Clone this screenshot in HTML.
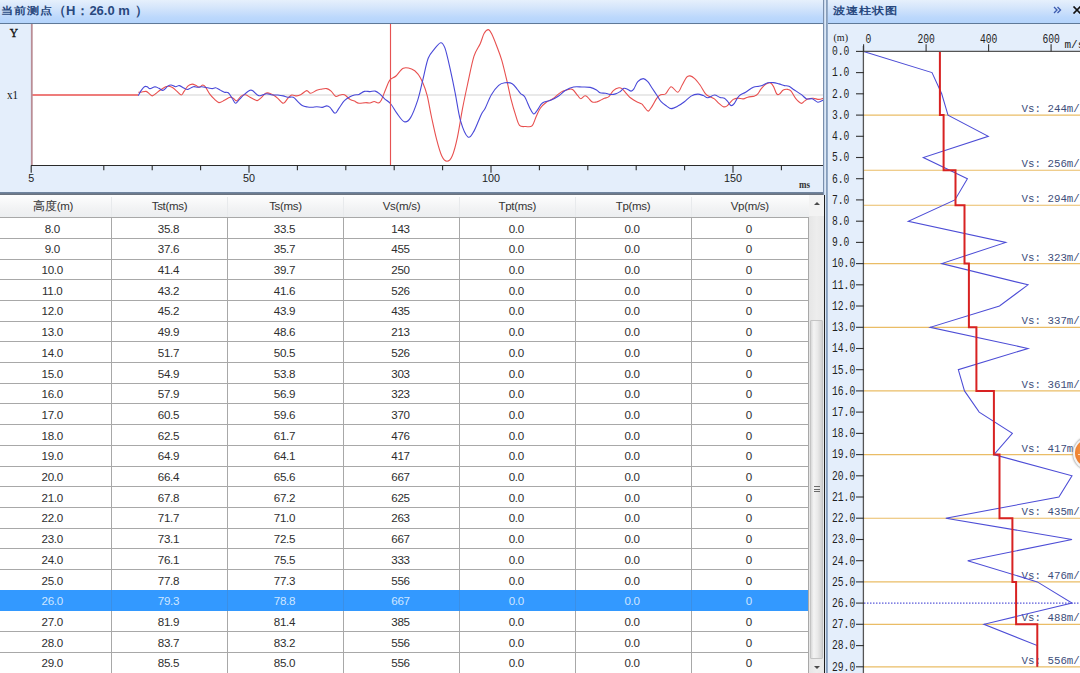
<!DOCTYPE html><html><head><meta charset="utf-8"><style>
*{margin:0;padding:0;box-sizing:border-box}
html,body{width:1080px;height:673px;overflow:hidden;background:#fff;font-family:"Liberation Sans",sans-serif}
.abs{position:absolute}
.cell{position:absolute;text-align:center;font-size:11.6px;letter-spacing:-0.3px;color:#2e2e2e;line-height:21px;white-space:nowrap}
</style></head><body>

<div class="abs" style="left:0;top:0;width:823px;height:24.2px;background:linear-gradient(#e6f0fc 0%,#d4e5fb 35%,#bcd8fc 75%,#b4d4fc 100%);border-bottom:1.8px solid #5f7998"></div>
<div class="abs" style="left:1px;top:3px;font-size:13px;font-weight:bold;color:#28487e;white-space:nowrap"><span style="font-size:12.5px;display:inline-block;transform:scaleY(0.82);transform-origin:50% 30%">当前测点</span><span style="font-size:12.5px">（</span>H<span style="font-size:12.5px;margin-left:1px">：</span>26.0 m<span style="font-size:12.5px;margin-left:2px"> ）</span></div>
<div class="abs" style="left:0;top:24.2px;width:823.2px;height:168px;background:#e4eefb"></div>
<div class="abs" style="left:0;top:192.1px;width:823.2px;height:3.3px;background:linear-gradient(#7088a6,#6a6f78)"></div>
<div class="abs" style="left:828px;top:24px;width:252px;height:650px;background:#e4eefb"></div>
<div class="abs" style="left:828px;top:0;width:252px;height:24.4px;background:linear-gradient(#e6f0fc 0%,#d4e5fb 35%,#bcd8fc 75%,#b4d4fc 100%);border-bottom:1.8px solid #5f7998"></div>
<div class="abs" style="left:833px;top:3px;font-size:12.5px;font-weight:bold;color:#28487e;white-space:nowrap;transform:scaleY(0.82);transform-origin:0 30%">波速柱状图</div>
<svg class="abs" style="left:1053px;top:6px" width="9" height="8"><path d="M1 1 L4 4 L1 7 M4.5 1 L7.5 4 L4.5 7" fill="none" stroke="#3d5cb0" stroke-width="1.35"/></svg>
<svg class="abs" style="left:1072px;top:6px" width="10" height="8"><path d="M1.5 0.5 L8.5 7.5 M8.5 0.5 L1.5 7.5" fill="none" stroke="#111" stroke-width="1.7"/></svg>
<svg class="abs" style="left:0;top:0" width="1080" height="673"><rect x="32" y="24.2" width="791.2" height="141.3" fill="#fff"/><line x1="138" y1="95" x2="823" y2="95" stroke="#d4d4d4" stroke-width="1.2"/><line x1="31.2" y1="95" x2="138.3" y2="95" stroke="#e8504f" stroke-width="1.4"/><path d="M138.3,92.2 C138.8,92.2 139.8,92.3 141.1,92.2 C142.4,92.1 144.7,91.1 146.1,91.4 C147.5,91.7 148.4,93.2 149.4,93.9 C150.4,94.7 151.2,95.9 152.2,95.9 C153.2,95.9 154.3,94.6 155.6,93.7 C156.9,92.8 158.3,91.5 160.0,90.3 C161.7,89.1 164.1,87.4 165.6,86.7 C167.1,86.0 167.7,86.1 168.9,86.3 C170.1,86.5 171.5,87.0 172.8,87.8 C174.1,88.6 175.3,89.9 176.7,91.1 C178.1,92.3 179.9,94.9 181.1,95.0 C182.3,95.1 182.8,93.2 183.9,91.7 C185.0,90.2 186.4,87.4 187.8,86.1 C189.2,84.8 190.8,84.2 192.2,84.1 C193.6,84.0 194.9,85.1 196.1,85.6 C197.3,86.1 198.3,87.3 199.4,87.2 C200.5,87.1 201.8,85.0 202.8,85.0 C203.8,85.0 204.4,85.6 205.6,87.2 C206.8,88.8 208.5,92.4 210.0,94.4 C211.5,96.4 212.9,97.8 214.4,99.2 C215.9,100.6 217.2,102.4 218.9,102.6 C220.6,102.8 222.6,101.2 224.4,100.3 C226.2,99.4 228.5,97.5 230.0,97.2 C231.5,96.9 232.2,97.7 233.3,98.3 C234.4,98.9 235.4,101.2 236.7,100.8 C238.0,100.4 239.6,97.1 241.1,96.1 C242.6,95.1 244.1,94.6 245.6,94.8 C247.1,95.0 248.7,96.5 250.0,97.2 C251.3,97.9 252.1,98.3 253.3,98.9 C254.5,99.5 255.9,100.8 257.2,100.6 C258.5,100.4 259.7,99.0 261.1,97.8 C262.5,96.6 264.2,94.0 265.6,93.3 C267.0,92.5 268.1,93.0 269.4,93.3 C270.7,93.6 271.9,94.2 273.3,95.0 C274.7,95.8 276.1,96.9 277.8,98.3 C279.5,99.7 281.6,103.3 283.3,103.3 C285.0,103.3 286.4,99.7 287.8,98.3 C289.2,96.9 290.2,95.4 291.7,95.0 C293.2,94.6 295.1,96.0 296.7,95.9 C298.3,95.8 299.4,95.3 301.1,94.4 C302.8,93.5 305.1,90.8 306.7,90.6 C308.3,90.4 308.9,93.3 310.6,93.3 C312.3,93.2 314.9,91.0 316.7,90.3 C318.4,89.6 319.4,89.5 321.1,89.2 C322.8,88.9 325.0,88.3 326.7,88.6 C328.4,88.9 329.6,89.8 331.1,91.1 C332.6,92.4 334.1,95.6 335.6,96.3 C337.1,97.0 338.5,95.2 340.0,95.0 C341.5,94.8 342.7,94.1 344.4,94.8 C346.1,95.5 348.3,98.4 350.0,99.4 C351.7,100.5 352.9,100.4 354.4,101.1 C355.9,101.8 357.0,103.0 358.9,103.3 C360.8,103.5 363.8,102.6 365.6,102.6 C367.5,102.5 368.6,103.2 370.0,103.0 C371.4,102.8 372.8,101.5 374.2,101.5 C375.6,101.5 377.1,103.3 378.3,103.0 C379.5,102.7 380.2,102.2 381.4,99.9 C382.6,97.7 384.2,92.8 385.6,89.5 C387.0,86.2 388.1,82.3 389.8,80.1 C391.5,77.8 393.8,78.0 396.0,76.0 C398.2,74.0 400.7,69.5 403.3,68.3 C405.9,67.1 409.2,68.2 411.6,69.1 C414.0,70.0 415.9,71.6 417.8,73.9 C419.7,76.2 421.4,79.6 423.0,83.2 C424.6,86.8 425.8,90.2 427.2,95.7 C428.6,101.2 429.8,109.2 431.4,116.5 C433.0,123.8 434.9,132.8 436.6,139.4 C438.3,146.0 440.1,152.4 441.8,156.0 C443.5,159.6 445.3,161.2 447.0,161.2 C448.7,161.2 450.5,160.0 452.2,156.0 C453.9,152.0 455.7,145.3 457.4,137.3 C459.1,129.3 460.9,117.2 462.6,108.2 C464.3,99.2 465.9,91.9 467.8,83.2 C469.7,74.5 471.9,62.8 474.0,56.2 C476.1,49.6 478.5,47.5 480.2,43.7 C481.9,39.9 482.8,35.6 484.2,33.3 C485.6,30.9 487.1,29.6 488.3,29.6 C489.5,29.6 490.0,30.6 491.4,33.3 C492.8,36.0 494.9,41.3 496.6,45.8 C498.3,50.3 500.1,54.5 501.8,60.4 C503.5,66.3 505.4,74.6 507.0,81.2 C508.6,87.8 509.8,94.4 511.2,99.9 C512.6,105.4 514.0,110.2 515.4,114.4 C516.8,118.6 517.8,123.3 519.5,125.3 C521.2,127.3 523.7,126.4 525.8,126.5 C527.9,126.6 530.3,127.6 532.0,125.9 C533.7,124.2 534.8,119.5 536.2,116.5 C537.6,113.5 538.6,110.6 540.3,108.2 C542.0,105.8 544.5,103.6 546.6,102.0 C548.7,100.4 550.7,100.2 552.8,98.8 C554.9,97.4 557.3,94.9 559.0,93.6 C560.7,92.3 561.6,91.8 563.2,91.1 C564.8,90.4 566.8,89.8 568.4,89.5 C570.0,89.2 571.0,88.5 572.6,89.5 C574.2,90.5 576.4,94.2 577.8,95.7 C579.2,97.2 579.7,98.8 580.9,98.8 C582.1,98.8 583.8,95.9 585.0,95.7 C586.2,95.5 587.0,96.8 588.2,97.8 C589.4,98.8 590.9,101.3 592.3,102.0 C593.7,102.7 595.2,102.2 596.5,102.0 C597.8,101.8 598.7,101.2 600.0,100.6 C601.3,100.0 602.9,98.9 604.4,98.3 C605.9,97.7 607.4,98.0 608.9,96.7 C610.4,95.4 611.6,92.1 613.3,90.6 C615.0,89.1 617.4,88.1 618.9,87.8 C620.4,87.5 620.9,87.9 622.2,88.9 C623.5,89.9 625.2,92.3 626.7,93.9 C628.2,95.5 629.4,97.0 631.1,98.3 C632.8,99.6 634.9,100.8 636.7,101.7 C638.5,102.6 640.4,103.0 641.7,103.9 C643.0,104.8 643.3,106.0 644.4,107.2 C645.5,108.4 647.0,111.3 648.3,111.1 C649.6,110.9 650.8,108.2 652.2,106.1 C653.6,104.0 655.3,100.2 656.7,98.3 C658.1,96.4 659.1,95.5 660.6,94.8 C662.1,94.1 663.9,95.2 665.6,93.9 C667.4,92.6 669.1,87.0 671.1,86.7 C673.1,86.4 675.9,92.5 677.8,92.2 C679.6,91.9 680.7,87.5 682.2,85.0 C683.7,82.5 685.4,78.7 686.7,77.2 C688.0,75.7 688.7,75.7 690.0,75.9 C691.3,76.1 692.7,76.8 694.4,78.3 C696.1,79.8 698.1,82.4 700.0,85.0 C701.9,87.6 703.9,92.0 705.6,93.9 C707.3,95.9 708.5,95.9 710.0,96.7 C711.5,97.5 712.9,97.8 714.4,98.9 C715.9,100.0 717.4,102.0 718.9,103.3 C720.4,104.6 722.0,106.2 723.3,106.7 C724.6,107.2 725.7,106.7 726.7,106.1 C727.7,105.5 728.3,104.4 729.4,103.3 C730.5,102.2 731.9,100.3 733.3,99.4 C734.7,98.5 736.1,98.2 737.8,98.1 C739.5,98.0 741.6,99.1 743.3,98.9 C745.0,98.8 745.9,97.7 747.8,97.2 C749.6,96.7 752.7,96.6 754.4,96.1 C756.1,95.5 756.7,95.1 757.8,93.9 C758.9,92.7 759.8,90.5 761.1,88.9 C762.4,87.3 764.1,85.4 765.6,84.4 C767.1,83.4 768.7,82.5 770.0,82.8 C771.3,83.1 772.2,84.2 773.3,86.1 C774.4,87.9 775.7,92.6 776.7,93.9 C777.7,95.2 778.3,94.8 779.4,94.1 C780.5,93.4 781.9,90.8 783.3,90.0 C784.7,89.2 786.5,89.2 787.8,89.4 C789.1,89.6 789.8,89.6 791.1,91.1 C792.4,92.6 793.9,96.3 795.6,98.3 C797.3,100.3 799.6,102.8 801.1,103.3 C802.6,103.8 803.3,101.8 804.4,101.1 C805.5,100.4 806.3,99.4 807.8,98.9 C809.3,98.4 811.4,98.2 813.3,98.3 C815.1,98.4 817.2,99.4 818.9,99.4 C820.6,99.4 822.6,98.5 823.3,98.3" fill="none" stroke="#e8504f" stroke-width="1.1" stroke-linejoin="round"/><path d="M138.3,95.6 C138.8,94.8 140.1,92.1 141.1,90.6 C142.1,89.1 143.4,87.3 144.4,86.7 C145.4,86.1 146.3,86.4 147.2,86.7 C148.1,87.0 148.7,88.6 150.0,88.6 C151.3,88.6 153.5,86.8 155.0,86.7 C156.5,86.7 157.5,87.7 158.9,88.3 C160.3,88.9 161.8,90.7 163.3,90.3 C164.8,89.9 166.5,87.0 167.8,86.1 C169.1,85.2 169.8,84.9 171.1,85.0 C172.4,85.1 174.2,86.6 175.6,86.7 C177.0,86.8 177.9,85.3 179.4,85.6 C180.9,85.9 183.0,87.7 184.4,88.3 C185.8,88.9 186.3,89.7 187.8,89.4 C189.3,89.1 191.6,87.1 193.3,86.7 C195.0,86.3 196.4,87.2 197.8,87.2 C199.2,87.2 200.0,86.6 201.7,86.7 C203.4,86.8 206.1,87.5 207.8,87.8 C209.6,88.1 210.9,88.6 212.2,88.6 C213.5,88.6 214.3,87.6 215.6,87.8 C216.9,88.0 218.5,89.3 220.0,90.0 C221.5,90.7 223.0,91.7 224.4,92.2 C225.8,92.7 227.0,91.8 228.3,92.8 C229.6,93.8 231.0,96.5 232.2,98.3 C233.4,100.0 234.4,103.1 235.6,103.3 C236.8,103.5 237.9,100.9 239.4,99.4 C240.9,97.9 242.6,95.9 244.4,94.4 C246.2,92.9 248.6,90.9 250.0,90.3 C251.4,89.7 251.4,89.9 252.8,90.8 C254.2,91.7 256.7,94.9 258.3,95.6 C259.9,96.3 260.8,95.3 262.2,95.0 C263.6,94.7 265.0,93.7 266.7,93.7 C268.4,93.7 270.3,94.8 272.2,95.0 C274.1,95.2 275.9,94.8 277.8,95.0 C279.7,95.2 281.6,95.5 283.3,95.9 C285.0,96.3 286.1,97.0 287.8,97.2 C289.5,97.4 291.6,96.5 293.3,97.2 C295.0,98.0 296.3,100.3 297.8,101.7 C299.3,103.1 300.5,104.7 302.2,105.6 C303.9,106.5 306.1,106.7 307.8,107.0 C309.5,107.3 310.7,107.2 312.2,107.2 C313.7,107.2 315.0,106.7 316.7,106.7 C318.4,106.7 320.5,107.5 322.2,107.4 C323.9,107.3 325.4,105.9 326.7,105.9 C328.0,105.9 328.6,106.2 330.0,107.4 C331.4,108.6 333.5,113.2 335.0,113.3 C336.5,113.4 337.3,110.4 338.9,108.3 C340.5,106.2 342.5,102.5 344.4,100.6 C346.2,98.7 348.3,97.6 350.0,96.7 C351.7,95.8 352.9,95.4 354.4,95.0 C355.9,94.6 357.2,95.0 358.9,94.4 C360.6,93.8 362.5,91.9 364.4,91.4 C366.2,90.9 368.2,91.6 370.0,91.6 C371.8,91.5 373.6,90.8 375.2,91.1 C376.8,91.4 377.8,92.3 379.4,93.6 C381.0,94.9 382.7,97.1 384.6,98.8 C386.5,100.5 388.7,101.6 390.8,104.0 C392.9,106.4 394.8,110.5 397.0,113.4 C399.2,116.4 402.0,121.0 404.3,121.7 C406.6,122.4 408.4,121.2 410.6,117.6 C412.9,114.0 415.7,106.3 417.8,99.9 C419.9,93.5 421.3,86.0 423.0,79.1 C424.7,72.2 426.3,63.3 428.2,58.3 C430.1,53.3 432.4,51.5 434.5,48.9 C436.6,46.3 439.0,42.9 440.7,42.7 C442.4,42.5 443.3,43.6 444.9,47.9 C446.5,52.2 448.4,61.1 450.1,68.7 C451.8,76.3 453.6,84.9 455.3,93.6 C457.0,102.3 458.4,113.5 460.5,120.7 C462.6,127.9 465.6,135.2 467.8,136.9 C470.1,138.6 471.8,134.8 474.0,131.1 C476.2,127.3 479.4,118.2 481.3,114.4 C483.2,110.6 483.5,111.5 485.2,108.2 C486.9,104.9 489.1,98.5 491.4,94.7 C493.6,90.9 496.4,87.3 498.7,85.3 C501.0,83.3 502.8,83.1 505.0,82.8 C507.2,82.5 510.1,82.6 512.2,83.7 C514.3,84.8 516.0,87.8 517.4,89.5 C518.8,91.2 519.4,92.4 520.6,93.6 C521.8,94.8 523.2,94.4 524.7,96.8 C526.2,99.2 528.4,105.3 529.9,108.2 C531.4,111.1 532.5,113.7 533.7,114.0 C534.9,114.3 535.8,112.1 537.2,110.3 C538.7,108.5 540.1,104.7 542.4,103.0 C544.6,101.3 547.9,101.5 550.7,100.3 C553.5,99.1 556.6,97.3 559.0,95.7 C561.4,94.1 562.9,92.0 565.3,90.5 C567.7,89.0 570.8,87.6 573.6,87.0 C576.4,86.4 579.1,86.9 581.9,87.0 C584.7,87.1 587.8,86.9 590.2,87.4 C592.6,87.9 594.9,89.0 596.5,89.9 C598.1,90.8 598.5,92.2 600.0,92.8 C601.5,93.4 603.9,93.0 605.6,93.3 C607.3,93.6 608.3,94.3 610.0,94.4 C611.7,94.5 613.9,94.4 615.6,93.9 C617.3,93.5 618.6,92.6 620.0,91.7 C621.4,90.8 622.6,88.7 623.9,88.3 C625.2,87.9 626.6,88.9 627.8,89.4 C629.0,89.9 630.1,91.2 631.1,91.1 C632.1,91.0 632.8,90.5 633.9,88.9 C635.0,87.3 636.2,83.4 637.8,81.7 C639.4,80.0 641.6,78.6 643.3,78.6 C645.0,78.6 646.3,80.1 647.8,81.7 C649.3,83.3 650.7,86.1 652.2,88.3 C653.7,90.5 655.2,92.8 656.7,95.0 C658.2,97.2 659.4,99.9 661.1,101.7 C662.8,103.5 665.0,104.9 666.7,106.1 C668.4,107.2 669.2,108.6 671.1,108.6 C673.0,108.6 675.6,107.2 677.8,106.1 C680.0,104.9 682.2,103.4 684.4,101.7 C686.6,100.0 688.9,97.4 691.1,96.1 C693.3,94.8 695.8,94.2 697.8,94.1 C699.8,94.0 701.6,95.0 703.3,95.6 C705.0,96.2 705.9,97.9 707.8,97.8 C709.6,97.7 712.4,95.1 714.4,95.0 C716.4,94.9 718.3,96.9 720.0,97.4 C721.7,98.0 723.1,97.6 724.4,98.3 C725.7,99.0 726.7,100.5 727.8,101.7 C728.9,102.9 730.0,105.3 731.1,105.6 C732.2,105.9 733.1,104.9 734.4,103.3 C735.7,101.7 737.0,97.9 738.9,96.1 C740.8,94.2 743.2,93.7 745.6,92.2 C748.0,90.7 751.1,88.2 753.3,87.2 C755.5,86.2 757.2,86.7 758.9,86.3 C760.6,85.9 761.8,85.6 763.3,85.0 C764.8,84.4 766.1,83.2 767.8,82.8 C769.5,82.4 771.4,82.4 773.3,82.6 C775.1,82.8 777.0,83.4 778.9,83.9 C780.8,84.4 782.7,85.2 784.4,85.6 C786.1,86.0 787.2,85.6 788.9,86.3 C790.6,87.0 792.4,88.7 794.4,90.0 C796.4,91.3 799.0,92.9 801.1,94.4 C803.2,95.9 804.9,98.2 806.7,98.9 C808.6,99.6 810.4,98.2 812.2,98.7 C814.1,99.2 815.9,102.0 817.8,102.2 C819.6,102.4 822.4,100.4 823.3,100.0" fill="none" stroke="#4848d8" stroke-width="1.1" stroke-linejoin="round"/><line x1="390.5" y1="24" x2="390.5" y2="166" stroke="#e65252" stroke-width="1.15"/><line x1="31.8" y1="24" x2="31.8" y2="166" stroke="#b98d96" stroke-width="1.8"/><line x1="31" y1="165.5" x2="823" y2="165.5" stroke="#2a2a2a" stroke-width="1.1"/><line x1="31.2" y1="165.5" x2="31.2" y2="172.7" stroke="#2a2a2a" stroke-width="1.1"/><line x1="103.8" y1="165.5" x2="103.8" y2="170.2" stroke="#2a2a2a" stroke-width="1.1"/><line x1="152.2" y1="165.5" x2="152.2" y2="170.2" stroke="#2a2a2a" stroke-width="1.1"/><line x1="200.6" y1="165.5" x2="200.6" y2="170.2" stroke="#2a2a2a" stroke-width="1.1"/><line x1="249.0" y1="165.5" x2="249.0" y2="172.7" stroke="#2a2a2a" stroke-width="1.1"/><line x1="297.4" y1="165.5" x2="297.4" y2="170.2" stroke="#2a2a2a" stroke-width="1.1"/><line x1="345.8" y1="165.5" x2="345.8" y2="170.2" stroke="#2a2a2a" stroke-width="1.1"/><line x1="394.2" y1="165.5" x2="394.2" y2="170.2" stroke="#2a2a2a" stroke-width="1.1"/><line x1="442.6" y1="165.5" x2="442.6" y2="170.2" stroke="#2a2a2a" stroke-width="1.1"/><line x1="491.0" y1="165.5" x2="491.0" y2="172.7" stroke="#2a2a2a" stroke-width="1.1"/><line x1="539.4" y1="165.5" x2="539.4" y2="170.2" stroke="#2a2a2a" stroke-width="1.1"/><line x1="587.8" y1="165.5" x2="587.8" y2="170.2" stroke="#2a2a2a" stroke-width="1.1"/><line x1="636.2" y1="165.5" x2="636.2" y2="170.2" stroke="#2a2a2a" stroke-width="1.1"/><line x1="684.6" y1="165.5" x2="684.6" y2="170.2" stroke="#2a2a2a" stroke-width="1.1"/><line x1="733.0" y1="165.5" x2="733.0" y2="172.7" stroke="#2a2a2a" stroke-width="1.1"/><line x1="781.4" y1="165.5" x2="781.4" y2="170.2" stroke="#2a2a2a" stroke-width="1.1"/><text x="31.2" y="182" font-family="Liberation Sans" font-size="11.5" fill="#222" text-anchor="middle" textLength="6" lengthAdjust="spacingAndGlyphs">5</text><text x="249.0" y="182" font-family="Liberation Sans" font-size="11.5" fill="#222" text-anchor="middle" textLength="12" lengthAdjust="spacingAndGlyphs">50</text><text x="491.0" y="182" font-family="Liberation Sans" font-size="11.5" fill="#222" text-anchor="middle" textLength="18" lengthAdjust="spacingAndGlyphs">100</text><text x="733.0" y="182" font-family="Liberation Sans" font-size="11.5" fill="#222" text-anchor="middle" textLength="18" lengthAdjust="spacingAndGlyphs">150</text><text x="799" y="188" font-family="Liberation Serif" font-size="11" font-weight="bold" fill="#333" textLength="11" lengthAdjust="spacingAndGlyphs">ms</text><text x="14" y="36.5" font-family="Liberation Serif" font-size="11.5" fill="#111" stroke="#111" stroke-width="0.35" text-anchor="middle">Y</text><text x="12.5" y="98.5" font-family="Liberation Serif" font-size="12" fill="#111" text-anchor="middle" textLength="11" lengthAdjust="spacingAndGlyphs">x1</text><rect x="864" y="51.4" width="216" height="622" fill="#fff"/><line x1="864" y1="115.1" x2="1080" y2="115.1" stroke="#eabd66" stroke-width="1.15"/><line x1="864" y1="170.2" x2="1080" y2="170.2" stroke="#eabd66" stroke-width="1.15"/><line x1="864" y1="205.2" x2="1080" y2="205.2" stroke="#eabd66" stroke-width="1.15"/><line x1="864" y1="263.6" x2="1080" y2="263.6" stroke="#eabd66" stroke-width="1.15"/><line x1="864" y1="327.3" x2="1080" y2="327.3" stroke="#eabd66" stroke-width="1.15"/><line x1="864" y1="390.9" x2="1080" y2="390.9" stroke="#eabd66" stroke-width="1.15"/><line x1="864" y1="454.6" x2="1080" y2="454.6" stroke="#eabd66" stroke-width="1.15"/><line x1="864" y1="518.2" x2="1080" y2="518.2" stroke="#eabd66" stroke-width="1.15"/><line x1="864" y1="581.9" x2="1080" y2="581.9" stroke="#eabd66" stroke-width="1.15"/><line x1="864" y1="624.3" x2="1080" y2="624.3" stroke="#eabd66" stroke-width="1.15"/><line x1="864" y1="666.8" x2="1080" y2="666.8" stroke="#eabd66" stroke-width="1.15"/><line x1="864" y1="603.1" x2="1080" y2="603.1" stroke="#3030d0" stroke-width="1" stroke-dasharray="1.5,1.5"/><text x="1021.5" y="112.1" font-family="Liberation Mono" font-size="11.5" fill="#3e4e7a" textLength="64.8" lengthAdjust="spacingAndGlyphs">Vs: 244m/s</text><text x="1021.5" y="167.2" font-family="Liberation Mono" font-size="11.5" fill="#3e4e7a" textLength="64.8" lengthAdjust="spacingAndGlyphs">Vs: 256m/s</text><text x="1021.5" y="202.2" font-family="Liberation Mono" font-size="11.5" fill="#3e4e7a" textLength="64.8" lengthAdjust="spacingAndGlyphs">Vs: 294m/s</text><text x="1021.5" y="260.6" font-family="Liberation Mono" font-size="11.5" fill="#3e4e7a" textLength="64.8" lengthAdjust="spacingAndGlyphs">Vs: 323m/s</text><text x="1021.5" y="324.3" font-family="Liberation Mono" font-size="11.5" fill="#3e4e7a" textLength="64.8" lengthAdjust="spacingAndGlyphs">Vs: 337m/s</text><text x="1021.5" y="387.9" font-family="Liberation Mono" font-size="11.5" fill="#3e4e7a" textLength="64.8" lengthAdjust="spacingAndGlyphs">Vs: 361m/s</text><text x="1021.5" y="451.6" font-family="Liberation Mono" font-size="11.5" fill="#3e4e7a" textLength="64.8" lengthAdjust="spacingAndGlyphs">Vs: 417m/s</text><text x="1021.5" y="515.2" font-family="Liberation Mono" font-size="11.5" fill="#3e4e7a" textLength="64.8" lengthAdjust="spacingAndGlyphs">Vs: 435m/s</text><text x="1021.5" y="578.9" font-family="Liberation Mono" font-size="11.5" fill="#3e4e7a" textLength="64.8" lengthAdjust="spacingAndGlyphs">Vs: 476m/s</text><text x="1021.5" y="621.3" font-family="Liberation Mono" font-size="11.5" fill="#3e4e7a" textLength="64.8" lengthAdjust="spacingAndGlyphs">Vs: 488m/s</text><text x="1021.5" y="663.8" font-family="Liberation Mono" font-size="11.5" fill="#3e4e7a" textLength="64.8" lengthAdjust="spacingAndGlyphs">Vs: 556m/s</text><polyline points="863.6,51.4 932.0,72.6 941.7,93.8 948.0,115.1 988.3,136.3 923.3,157.5 967.4,178.7 954.9,199.9 908.3,221.2 1005.8,242.4 941.7,263.6 1028.0,284.8 999.5,306.0 930.2,327.3 1028.0,348.5 958.3,369.7 964.5,390.9 979.2,412.1 1012.4,433.4 993.9,454.6 1072.0,475.8 1058.9,497.0 945.8,518.2 1072.0,539.5 967.7,560.7 1037.3,581.9 1072.0,603.1 983.9,624.3 1037.3,645.6 1037.3,666.8" fill="none" stroke="#4d4dd6" stroke-width="1.05"/><polyline points="939.9,51.4 939.9,115.1 943.6,115.1 943.6,170.2 955.5,170.2 955.5,205.2 964.5,205.2 964.5,263.6 968.9,263.6 968.9,327.3 976.4,327.3 976.4,390.9 993.9,390.9 993.9,454.6 999.5,454.6 999.5,518.2 1012.4,518.2 1012.4,581.9 1016.1,581.9 1016.1,624.3 1037.3,624.3 1037.3,666.8" fill="none" stroke="#d82222" stroke-width="2"/><line x1="863.4" y1="46" x2="863.4" y2="673" stroke="#555" stroke-width="1.3"/><line x1="863" y1="51.4" x2="1080" y2="51.4" stroke="#555" stroke-width="1.3"/><line x1="856" y1="51.4" x2="864" y2="51.4" stroke="#333" stroke-width="1.1"/><text x="832" y="55.2" font-family="Liberation Mono" font-size="12" fill="#1e1e1e" textLength="17.4" lengthAdjust="spacingAndGlyphs">0.0</text><line x1="856" y1="72.6" x2="864" y2="72.6" stroke="#333" stroke-width="1.1"/><text x="832" y="76.4" font-family="Liberation Mono" font-size="12" fill="#1e1e1e" textLength="17.4" lengthAdjust="spacingAndGlyphs">1.0</text><line x1="856" y1="93.8" x2="864" y2="93.8" stroke="#333" stroke-width="1.1"/><text x="832" y="97.6" font-family="Liberation Mono" font-size="12" fill="#1e1e1e" textLength="17.4" lengthAdjust="spacingAndGlyphs">2.0</text><line x1="856" y1="115.1" x2="864" y2="115.1" stroke="#333" stroke-width="1.1"/><text x="832" y="118.9" font-family="Liberation Mono" font-size="12" fill="#1e1e1e" textLength="17.4" lengthAdjust="spacingAndGlyphs">3.0</text><line x1="856" y1="136.3" x2="864" y2="136.3" stroke="#333" stroke-width="1.1"/><text x="832" y="140.1" font-family="Liberation Mono" font-size="12" fill="#1e1e1e" textLength="17.4" lengthAdjust="spacingAndGlyphs">4.0</text><line x1="856" y1="157.5" x2="864" y2="157.5" stroke="#333" stroke-width="1.1"/><text x="832" y="161.3" font-family="Liberation Mono" font-size="12" fill="#1e1e1e" textLength="17.4" lengthAdjust="spacingAndGlyphs">5.0</text><line x1="856" y1="178.7" x2="864" y2="178.7" stroke="#333" stroke-width="1.1"/><text x="832" y="182.5" font-family="Liberation Mono" font-size="12" fill="#1e1e1e" textLength="17.4" lengthAdjust="spacingAndGlyphs">6.0</text><line x1="856" y1="199.9" x2="864" y2="199.9" stroke="#333" stroke-width="1.1"/><text x="832" y="203.7" font-family="Liberation Mono" font-size="12" fill="#1e1e1e" textLength="17.4" lengthAdjust="spacingAndGlyphs">7.0</text><line x1="856" y1="221.2" x2="864" y2="221.2" stroke="#333" stroke-width="1.1"/><text x="832" y="225.0" font-family="Liberation Mono" font-size="12" fill="#1e1e1e" textLength="17.4" lengthAdjust="spacingAndGlyphs">8.0</text><line x1="856" y1="242.4" x2="864" y2="242.4" stroke="#333" stroke-width="1.1"/><text x="832" y="246.2" font-family="Liberation Mono" font-size="12" fill="#1e1e1e" textLength="17.4" lengthAdjust="spacingAndGlyphs">9.0</text><line x1="856" y1="263.6" x2="864" y2="263.6" stroke="#333" stroke-width="1.1"/><text x="832" y="267.4" font-family="Liberation Mono" font-size="12" fill="#1e1e1e" textLength="23.2" lengthAdjust="spacingAndGlyphs">10.0</text><line x1="856" y1="284.8" x2="864" y2="284.8" stroke="#333" stroke-width="1.1"/><text x="832" y="288.6" font-family="Liberation Mono" font-size="12" fill="#1e1e1e" textLength="23.2" lengthAdjust="spacingAndGlyphs">11.0</text><line x1="856" y1="306.0" x2="864" y2="306.0" stroke="#333" stroke-width="1.1"/><text x="832" y="309.8" font-family="Liberation Mono" font-size="12" fill="#1e1e1e" textLength="23.2" lengthAdjust="spacingAndGlyphs">12.0</text><line x1="856" y1="327.3" x2="864" y2="327.3" stroke="#333" stroke-width="1.1"/><text x="832" y="331.1" font-family="Liberation Mono" font-size="12" fill="#1e1e1e" textLength="23.2" lengthAdjust="spacingAndGlyphs">13.0</text><line x1="856" y1="348.5" x2="864" y2="348.5" stroke="#333" stroke-width="1.1"/><text x="832" y="352.3" font-family="Liberation Mono" font-size="12" fill="#1e1e1e" textLength="23.2" lengthAdjust="spacingAndGlyphs">14.0</text><line x1="856" y1="369.7" x2="864" y2="369.7" stroke="#333" stroke-width="1.1"/><text x="832" y="373.5" font-family="Liberation Mono" font-size="12" fill="#1e1e1e" textLength="23.2" lengthAdjust="spacingAndGlyphs">15.0</text><line x1="856" y1="390.9" x2="864" y2="390.9" stroke="#333" stroke-width="1.1"/><text x="832" y="394.7" font-family="Liberation Mono" font-size="12" fill="#1e1e1e" textLength="23.2" lengthAdjust="spacingAndGlyphs">16.0</text><line x1="856" y1="412.1" x2="864" y2="412.1" stroke="#333" stroke-width="1.1"/><text x="832" y="415.9" font-family="Liberation Mono" font-size="12" fill="#1e1e1e" textLength="23.2" lengthAdjust="spacingAndGlyphs">17.0</text><line x1="856" y1="433.4" x2="864" y2="433.4" stroke="#333" stroke-width="1.1"/><text x="832" y="437.2" font-family="Liberation Mono" font-size="12" fill="#1e1e1e" textLength="23.2" lengthAdjust="spacingAndGlyphs">18.0</text><line x1="856" y1="454.6" x2="864" y2="454.6" stroke="#333" stroke-width="1.1"/><text x="832" y="458.4" font-family="Liberation Mono" font-size="12" fill="#1e1e1e" textLength="23.2" lengthAdjust="spacingAndGlyphs">19.0</text><line x1="856" y1="475.8" x2="864" y2="475.8" stroke="#333" stroke-width="1.1"/><text x="832" y="479.6" font-family="Liberation Mono" font-size="12" fill="#1e1e1e" textLength="23.2" lengthAdjust="spacingAndGlyphs">20.0</text><line x1="856" y1="497.0" x2="864" y2="497.0" stroke="#333" stroke-width="1.1"/><text x="832" y="500.8" font-family="Liberation Mono" font-size="12" fill="#1e1e1e" textLength="23.2" lengthAdjust="spacingAndGlyphs">21.0</text><line x1="856" y1="518.2" x2="864" y2="518.2" stroke="#333" stroke-width="1.1"/><text x="832" y="522.0" font-family="Liberation Mono" font-size="12" fill="#1e1e1e" textLength="23.2" lengthAdjust="spacingAndGlyphs">22.0</text><line x1="856" y1="539.5" x2="864" y2="539.5" stroke="#333" stroke-width="1.1"/><text x="832" y="543.3" font-family="Liberation Mono" font-size="12" fill="#1e1e1e" textLength="23.2" lengthAdjust="spacingAndGlyphs">23.0</text><line x1="856" y1="560.7" x2="864" y2="560.7" stroke="#333" stroke-width="1.1"/><text x="832" y="564.5" font-family="Liberation Mono" font-size="12" fill="#1e1e1e" textLength="23.2" lengthAdjust="spacingAndGlyphs">24.0</text><line x1="856" y1="581.9" x2="864" y2="581.9" stroke="#333" stroke-width="1.1"/><text x="832" y="585.7" font-family="Liberation Mono" font-size="12" fill="#1e1e1e" textLength="23.2" lengthAdjust="spacingAndGlyphs">25.0</text><line x1="856" y1="603.1" x2="864" y2="603.1" stroke="#333" stroke-width="1.1"/><text x="832" y="606.9" font-family="Liberation Mono" font-size="12" fill="#1e1e1e" textLength="23.2" lengthAdjust="spacingAndGlyphs">26.0</text><line x1="856" y1="624.3" x2="864" y2="624.3" stroke="#333" stroke-width="1.1"/><text x="832" y="628.1" font-family="Liberation Mono" font-size="12" fill="#1e1e1e" textLength="23.2" lengthAdjust="spacingAndGlyphs">27.0</text><line x1="856" y1="645.6" x2="864" y2="645.6" stroke="#333" stroke-width="1.1"/><text x="832" y="649.4" font-family="Liberation Mono" font-size="12" fill="#1e1e1e" textLength="23.2" lengthAdjust="spacingAndGlyphs">28.0</text><line x1="856" y1="666.8" x2="864" y2="666.8" stroke="#333" stroke-width="1.1"/><text x="832" y="670.6" font-family="Liberation Mono" font-size="12" fill="#1e1e1e" textLength="23.2" lengthAdjust="spacingAndGlyphs">29.0</text><line x1="863.6" y1="44.2" x2="863.6" y2="51.4" stroke="#333" stroke-width="1.1"/><text x="868.5" y="42.5" font-family="Liberation Mono" font-size="12" fill="#222" text-anchor="middle" textLength="5.8" lengthAdjust="spacingAndGlyphs">0</text><line x1="926.1" y1="44.2" x2="926.1" y2="51.4" stroke="#333" stroke-width="1.1"/><text x="926.1" y="42.5" font-family="Liberation Mono" font-size="12" fill="#222" text-anchor="middle" textLength="17.4" lengthAdjust="spacingAndGlyphs">200</text><line x1="988.6" y1="44.2" x2="988.6" y2="51.4" stroke="#333" stroke-width="1.1"/><text x="988.6" y="42.5" font-family="Liberation Mono" font-size="12" fill="#222" text-anchor="middle" textLength="17.4" lengthAdjust="spacingAndGlyphs">400</text><line x1="1051.1" y1="44.2" x2="1051.1" y2="51.4" stroke="#333" stroke-width="1.1"/><text x="1051.1" y="42.5" font-family="Liberation Mono" font-size="12" fill="#222" text-anchor="middle" textLength="17.4" lengthAdjust="spacingAndGlyphs">600</text><text x="833.5" y="41" font-family="Liberation Serif" font-size="11" fill="#222" textLength="14.5" lengthAdjust="spacingAndGlyphs">(m)</text><text x="1064.5" y="48" font-family="Liberation Mono" font-size="11" fill="#222">m/s</text></svg>
<div class="abs" style="left:0;top:195.4px;width:824px;height:477.6px;background:#fff"></div>
<div class="abs" style="left:0;top:195.4px;width:808.5px;height:22.69999999999999px;background:linear-gradient(#fefefe,#f2f3f4 60%,#eceef0);border-bottom:1px solid #c6c6c6"></div>
<div class="cell" style="left:-5px;top:196.4px;width:116.5px;font-size:11.5px;color:#333">高度(m)</div>
<div class="cell" style="left:111.5px;top:196.4px;width:116.0px;font-size:11.5px;color:#333">Tst(ms)</div>
<div class="abs" style="left:111.0px;top:197.4px;width:1px;height:19.19999999999999px;background:#e8eaec"></div>
<div class="cell" style="left:227.5px;top:196.4px;width:116.0px;font-size:11.5px;color:#333">Ts(ms)</div>
<div class="abs" style="left:227.0px;top:197.4px;width:1px;height:19.19999999999999px;background:#e8eaec"></div>
<div class="cell" style="left:343.5px;top:196.4px;width:116.0px;font-size:11.5px;color:#333">Vs(m/s)</div>
<div class="abs" style="left:343.0px;top:197.4px;width:1px;height:19.19999999999999px;background:#e8eaec"></div>
<div class="cell" style="left:459.5px;top:196.4px;width:115.5px;font-size:11.5px;color:#333">Tpt(ms)</div>
<div class="abs" style="left:459.0px;top:197.4px;width:1px;height:19.19999999999999px;background:#e8eaec"></div>
<div class="cell" style="left:575px;top:196.4px;width:116px;font-size:11.5px;color:#333">Tp(ms)</div>
<div class="abs" style="left:574.5px;top:197.4px;width:1px;height:19.19999999999999px;background:#e8eaec"></div>
<div class="cell" style="left:691px;top:196.4px;width:117.5px;font-size:11.5px;color:#333">Vp(m/s)</div>
<div class="abs" style="left:690.5px;top:197.4px;width:1px;height:19.19999999999999px;background:#e8eaec"></div>
<div class="abs" style="left:0;top:217.10px;width:808.5px;height:1px;background:#a8a8a8"></div>
<div class="abs" style="left:0;top:237.80px;width:808.5px;height:1px;background:#a8a8a8"></div>
<div class="abs" style="left:0;top:258.50px;width:808.5px;height:1px;background:#a8a8a8"></div>
<div class="abs" style="left:0;top:279.20px;width:808.5px;height:1px;background:#a8a8a8"></div>
<div class="abs" style="left:0;top:299.90px;width:808.5px;height:1px;background:#a8a8a8"></div>
<div class="abs" style="left:0;top:320.60px;width:808.5px;height:1px;background:#a8a8a8"></div>
<div class="abs" style="left:0;top:341.30px;width:808.5px;height:1px;background:#a8a8a8"></div>
<div class="abs" style="left:0;top:362.00px;width:808.5px;height:1px;background:#a8a8a8"></div>
<div class="abs" style="left:0;top:382.70px;width:808.5px;height:1px;background:#a8a8a8"></div>
<div class="abs" style="left:0;top:403.40px;width:808.5px;height:1px;background:#a8a8a8"></div>
<div class="abs" style="left:0;top:424.10px;width:808.5px;height:1px;background:#a8a8a8"></div>
<div class="abs" style="left:0;top:444.80px;width:808.5px;height:1px;background:#a8a8a8"></div>
<div class="abs" style="left:0;top:465.50px;width:808.5px;height:1px;background:#a8a8a8"></div>
<div class="abs" style="left:0;top:486.20px;width:808.5px;height:1px;background:#a8a8a8"></div>
<div class="abs" style="left:0;top:506.90px;width:808.5px;height:1px;background:#a8a8a8"></div>
<div class="abs" style="left:0;top:527.60px;width:808.5px;height:1px;background:#a8a8a8"></div>
<div class="abs" style="left:0;top:548.30px;width:808.5px;height:1px;background:#a8a8a8"></div>
<div class="abs" style="left:0;top:569.00px;width:808.5px;height:1px;background:#a8a8a8"></div>
<div class="abs" style="left:0;top:589.70px;width:808.5px;height:1px;background:#a8a8a8"></div>
<div class="abs" style="left:0;top:610.40px;width:808.5px;height:1px;background:#a8a8a8"></div>
<div class="abs" style="left:0;top:631.10px;width:808.5px;height:1px;background:#a8a8a8"></div>
<div class="abs" style="left:0;top:651.80px;width:808.5px;height:1px;background:#a8a8a8"></div>
<div class="abs" style="left:0;top:672.50px;width:808.5px;height:1px;background:#a8a8a8"></div>
<div class="abs" style="left:111.0px;top:217.6px;width:1px;height:455.4px;background:#a8a8a8"></div>
<div class="abs" style="left:227.0px;top:217.6px;width:1px;height:455.4px;background:#a8a8a8"></div>
<div class="abs" style="left:343.0px;top:217.6px;width:1px;height:455.4px;background:#a8a8a8"></div>
<div class="abs" style="left:459.0px;top:217.6px;width:1px;height:455.4px;background:#a8a8a8"></div>
<div class="abs" style="left:574.5px;top:217.6px;width:1px;height:455.4px;background:#a8a8a8"></div>
<div class="abs" style="left:690.5px;top:217.6px;width:1px;height:455.4px;background:#a8a8a8"></div>
<div class="abs" style="left:808.0px;top:217.6px;width:1px;height:455.4px;background:#a8a8a8"></div>
<div class="abs" style="left:0;top:589.90px;width:808px;height:21.00px;background:#3399ff"></div>
<div class="abs" style="left:111.0px;top:589.90px;width:1px;height:21.00px;background:#3a8fe6"></div>
<div class="abs" style="left:227.0px;top:589.90px;width:1px;height:21.00px;background:#3a8fe6"></div>
<div class="abs" style="left:343.0px;top:589.90px;width:1px;height:21.00px;background:#3a8fe6"></div>
<div class="abs" style="left:459.0px;top:589.90px;width:1px;height:21.00px;background:#3a8fe6"></div>
<div class="abs" style="left:574.5px;top:589.90px;width:1px;height:21.00px;background:#3a8fe6"></div>
<div class="abs" style="left:690.5px;top:589.90px;width:1px;height:21.00px;background:#3a8fe6"></div>
<div class="cell" style="left:-6px;top:217.60px;width:116.5px;color:#2e2e2e">8.0</div>
<div class="cell" style="left:110.5px;top:217.60px;width:116.0px;color:#2e2e2e">35.8</div>
<div class="cell" style="left:226.5px;top:217.60px;width:116.0px;color:#2e2e2e">33.5</div>
<div class="cell" style="left:342.5px;top:217.60px;width:116.0px;color:#2e2e2e">143</div>
<div class="cell" style="left:458.5px;top:217.60px;width:115.5px;color:#2e2e2e">0.0</div>
<div class="cell" style="left:574px;top:217.60px;width:116px;color:#2e2e2e">0.0</div>
<div class="cell" style="left:690px;top:217.60px;width:117.5px;color:#2e2e2e">0</div>
<div class="cell" style="left:-6px;top:238.30px;width:116.5px;color:#2e2e2e">9.0</div>
<div class="cell" style="left:110.5px;top:238.30px;width:116.0px;color:#2e2e2e">37.6</div>
<div class="cell" style="left:226.5px;top:238.30px;width:116.0px;color:#2e2e2e">35.7</div>
<div class="cell" style="left:342.5px;top:238.30px;width:116.0px;color:#2e2e2e">455</div>
<div class="cell" style="left:458.5px;top:238.30px;width:115.5px;color:#2e2e2e">0.0</div>
<div class="cell" style="left:574px;top:238.30px;width:116px;color:#2e2e2e">0.0</div>
<div class="cell" style="left:690px;top:238.30px;width:117.5px;color:#2e2e2e">0</div>
<div class="cell" style="left:-6px;top:259.00px;width:116.5px;color:#2e2e2e">10.0</div>
<div class="cell" style="left:110.5px;top:259.00px;width:116.0px;color:#2e2e2e">41.4</div>
<div class="cell" style="left:226.5px;top:259.00px;width:116.0px;color:#2e2e2e">39.7</div>
<div class="cell" style="left:342.5px;top:259.00px;width:116.0px;color:#2e2e2e">250</div>
<div class="cell" style="left:458.5px;top:259.00px;width:115.5px;color:#2e2e2e">0.0</div>
<div class="cell" style="left:574px;top:259.00px;width:116px;color:#2e2e2e">0.0</div>
<div class="cell" style="left:690px;top:259.00px;width:117.5px;color:#2e2e2e">0</div>
<div class="cell" style="left:-6px;top:279.70px;width:116.5px;color:#2e2e2e">11.0</div>
<div class="cell" style="left:110.5px;top:279.70px;width:116.0px;color:#2e2e2e">43.2</div>
<div class="cell" style="left:226.5px;top:279.70px;width:116.0px;color:#2e2e2e">41.6</div>
<div class="cell" style="left:342.5px;top:279.70px;width:116.0px;color:#2e2e2e">526</div>
<div class="cell" style="left:458.5px;top:279.70px;width:115.5px;color:#2e2e2e">0.0</div>
<div class="cell" style="left:574px;top:279.70px;width:116px;color:#2e2e2e">0.0</div>
<div class="cell" style="left:690px;top:279.70px;width:117.5px;color:#2e2e2e">0</div>
<div class="cell" style="left:-6px;top:300.40px;width:116.5px;color:#2e2e2e">12.0</div>
<div class="cell" style="left:110.5px;top:300.40px;width:116.0px;color:#2e2e2e">45.2</div>
<div class="cell" style="left:226.5px;top:300.40px;width:116.0px;color:#2e2e2e">43.9</div>
<div class="cell" style="left:342.5px;top:300.40px;width:116.0px;color:#2e2e2e">435</div>
<div class="cell" style="left:458.5px;top:300.40px;width:115.5px;color:#2e2e2e">0.0</div>
<div class="cell" style="left:574px;top:300.40px;width:116px;color:#2e2e2e">0.0</div>
<div class="cell" style="left:690px;top:300.40px;width:117.5px;color:#2e2e2e">0</div>
<div class="cell" style="left:-6px;top:321.10px;width:116.5px;color:#2e2e2e">13.0</div>
<div class="cell" style="left:110.5px;top:321.10px;width:116.0px;color:#2e2e2e">49.9</div>
<div class="cell" style="left:226.5px;top:321.10px;width:116.0px;color:#2e2e2e">48.6</div>
<div class="cell" style="left:342.5px;top:321.10px;width:116.0px;color:#2e2e2e">213</div>
<div class="cell" style="left:458.5px;top:321.10px;width:115.5px;color:#2e2e2e">0.0</div>
<div class="cell" style="left:574px;top:321.10px;width:116px;color:#2e2e2e">0.0</div>
<div class="cell" style="left:690px;top:321.10px;width:117.5px;color:#2e2e2e">0</div>
<div class="cell" style="left:-6px;top:341.80px;width:116.5px;color:#2e2e2e">14.0</div>
<div class="cell" style="left:110.5px;top:341.80px;width:116.0px;color:#2e2e2e">51.7</div>
<div class="cell" style="left:226.5px;top:341.80px;width:116.0px;color:#2e2e2e">50.5</div>
<div class="cell" style="left:342.5px;top:341.80px;width:116.0px;color:#2e2e2e">526</div>
<div class="cell" style="left:458.5px;top:341.80px;width:115.5px;color:#2e2e2e">0.0</div>
<div class="cell" style="left:574px;top:341.80px;width:116px;color:#2e2e2e">0.0</div>
<div class="cell" style="left:690px;top:341.80px;width:117.5px;color:#2e2e2e">0</div>
<div class="cell" style="left:-6px;top:362.50px;width:116.5px;color:#2e2e2e">15.0</div>
<div class="cell" style="left:110.5px;top:362.50px;width:116.0px;color:#2e2e2e">54.9</div>
<div class="cell" style="left:226.5px;top:362.50px;width:116.0px;color:#2e2e2e">53.8</div>
<div class="cell" style="left:342.5px;top:362.50px;width:116.0px;color:#2e2e2e">303</div>
<div class="cell" style="left:458.5px;top:362.50px;width:115.5px;color:#2e2e2e">0.0</div>
<div class="cell" style="left:574px;top:362.50px;width:116px;color:#2e2e2e">0.0</div>
<div class="cell" style="left:690px;top:362.50px;width:117.5px;color:#2e2e2e">0</div>
<div class="cell" style="left:-6px;top:383.20px;width:116.5px;color:#2e2e2e">16.0</div>
<div class="cell" style="left:110.5px;top:383.20px;width:116.0px;color:#2e2e2e">57.9</div>
<div class="cell" style="left:226.5px;top:383.20px;width:116.0px;color:#2e2e2e">56.9</div>
<div class="cell" style="left:342.5px;top:383.20px;width:116.0px;color:#2e2e2e">323</div>
<div class="cell" style="left:458.5px;top:383.20px;width:115.5px;color:#2e2e2e">0.0</div>
<div class="cell" style="left:574px;top:383.20px;width:116px;color:#2e2e2e">0.0</div>
<div class="cell" style="left:690px;top:383.20px;width:117.5px;color:#2e2e2e">0</div>
<div class="cell" style="left:-6px;top:403.90px;width:116.5px;color:#2e2e2e">17.0</div>
<div class="cell" style="left:110.5px;top:403.90px;width:116.0px;color:#2e2e2e">60.5</div>
<div class="cell" style="left:226.5px;top:403.90px;width:116.0px;color:#2e2e2e">59.6</div>
<div class="cell" style="left:342.5px;top:403.90px;width:116.0px;color:#2e2e2e">370</div>
<div class="cell" style="left:458.5px;top:403.90px;width:115.5px;color:#2e2e2e">0.0</div>
<div class="cell" style="left:574px;top:403.90px;width:116px;color:#2e2e2e">0.0</div>
<div class="cell" style="left:690px;top:403.90px;width:117.5px;color:#2e2e2e">0</div>
<div class="cell" style="left:-6px;top:424.60px;width:116.5px;color:#2e2e2e">18.0</div>
<div class="cell" style="left:110.5px;top:424.60px;width:116.0px;color:#2e2e2e">62.5</div>
<div class="cell" style="left:226.5px;top:424.60px;width:116.0px;color:#2e2e2e">61.7</div>
<div class="cell" style="left:342.5px;top:424.60px;width:116.0px;color:#2e2e2e">476</div>
<div class="cell" style="left:458.5px;top:424.60px;width:115.5px;color:#2e2e2e">0.0</div>
<div class="cell" style="left:574px;top:424.60px;width:116px;color:#2e2e2e">0.0</div>
<div class="cell" style="left:690px;top:424.60px;width:117.5px;color:#2e2e2e">0</div>
<div class="cell" style="left:-6px;top:445.30px;width:116.5px;color:#2e2e2e">19.0</div>
<div class="cell" style="left:110.5px;top:445.30px;width:116.0px;color:#2e2e2e">64.9</div>
<div class="cell" style="left:226.5px;top:445.30px;width:116.0px;color:#2e2e2e">64.1</div>
<div class="cell" style="left:342.5px;top:445.30px;width:116.0px;color:#2e2e2e">417</div>
<div class="cell" style="left:458.5px;top:445.30px;width:115.5px;color:#2e2e2e">0.0</div>
<div class="cell" style="left:574px;top:445.30px;width:116px;color:#2e2e2e">0.0</div>
<div class="cell" style="left:690px;top:445.30px;width:117.5px;color:#2e2e2e">0</div>
<div class="cell" style="left:-6px;top:466.00px;width:116.5px;color:#2e2e2e">20.0</div>
<div class="cell" style="left:110.5px;top:466.00px;width:116.0px;color:#2e2e2e">66.4</div>
<div class="cell" style="left:226.5px;top:466.00px;width:116.0px;color:#2e2e2e">65.6</div>
<div class="cell" style="left:342.5px;top:466.00px;width:116.0px;color:#2e2e2e">667</div>
<div class="cell" style="left:458.5px;top:466.00px;width:115.5px;color:#2e2e2e">0.0</div>
<div class="cell" style="left:574px;top:466.00px;width:116px;color:#2e2e2e">0.0</div>
<div class="cell" style="left:690px;top:466.00px;width:117.5px;color:#2e2e2e">0</div>
<div class="cell" style="left:-6px;top:486.70px;width:116.5px;color:#2e2e2e">21.0</div>
<div class="cell" style="left:110.5px;top:486.70px;width:116.0px;color:#2e2e2e">67.8</div>
<div class="cell" style="left:226.5px;top:486.70px;width:116.0px;color:#2e2e2e">67.2</div>
<div class="cell" style="left:342.5px;top:486.70px;width:116.0px;color:#2e2e2e">625</div>
<div class="cell" style="left:458.5px;top:486.70px;width:115.5px;color:#2e2e2e">0.0</div>
<div class="cell" style="left:574px;top:486.70px;width:116px;color:#2e2e2e">0.0</div>
<div class="cell" style="left:690px;top:486.70px;width:117.5px;color:#2e2e2e">0</div>
<div class="cell" style="left:-6px;top:507.40px;width:116.5px;color:#2e2e2e">22.0</div>
<div class="cell" style="left:110.5px;top:507.40px;width:116.0px;color:#2e2e2e">71.7</div>
<div class="cell" style="left:226.5px;top:507.40px;width:116.0px;color:#2e2e2e">71.0</div>
<div class="cell" style="left:342.5px;top:507.40px;width:116.0px;color:#2e2e2e">263</div>
<div class="cell" style="left:458.5px;top:507.40px;width:115.5px;color:#2e2e2e">0.0</div>
<div class="cell" style="left:574px;top:507.40px;width:116px;color:#2e2e2e">0.0</div>
<div class="cell" style="left:690px;top:507.40px;width:117.5px;color:#2e2e2e">0</div>
<div class="cell" style="left:-6px;top:528.10px;width:116.5px;color:#2e2e2e">23.0</div>
<div class="cell" style="left:110.5px;top:528.10px;width:116.0px;color:#2e2e2e">73.1</div>
<div class="cell" style="left:226.5px;top:528.10px;width:116.0px;color:#2e2e2e">72.5</div>
<div class="cell" style="left:342.5px;top:528.10px;width:116.0px;color:#2e2e2e">667</div>
<div class="cell" style="left:458.5px;top:528.10px;width:115.5px;color:#2e2e2e">0.0</div>
<div class="cell" style="left:574px;top:528.10px;width:116px;color:#2e2e2e">0.0</div>
<div class="cell" style="left:690px;top:528.10px;width:117.5px;color:#2e2e2e">0</div>
<div class="cell" style="left:-6px;top:548.80px;width:116.5px;color:#2e2e2e">24.0</div>
<div class="cell" style="left:110.5px;top:548.80px;width:116.0px;color:#2e2e2e">76.1</div>
<div class="cell" style="left:226.5px;top:548.80px;width:116.0px;color:#2e2e2e">75.5</div>
<div class="cell" style="left:342.5px;top:548.80px;width:116.0px;color:#2e2e2e">333</div>
<div class="cell" style="left:458.5px;top:548.80px;width:115.5px;color:#2e2e2e">0.0</div>
<div class="cell" style="left:574px;top:548.80px;width:116px;color:#2e2e2e">0.0</div>
<div class="cell" style="left:690px;top:548.80px;width:117.5px;color:#2e2e2e">0</div>
<div class="cell" style="left:-6px;top:569.50px;width:116.5px;color:#2e2e2e">25.0</div>
<div class="cell" style="left:110.5px;top:569.50px;width:116.0px;color:#2e2e2e">77.8</div>
<div class="cell" style="left:226.5px;top:569.50px;width:116.0px;color:#2e2e2e">77.3</div>
<div class="cell" style="left:342.5px;top:569.50px;width:116.0px;color:#2e2e2e">556</div>
<div class="cell" style="left:458.5px;top:569.50px;width:115.5px;color:#2e2e2e">0.0</div>
<div class="cell" style="left:574px;top:569.50px;width:116px;color:#2e2e2e">0.0</div>
<div class="cell" style="left:690px;top:569.50px;width:117.5px;color:#2e2e2e">0</div>
<div class="cell" style="left:-6px;top:590.20px;width:116.5px;color:#cfe6ff">26.0</div>
<div class="cell" style="left:110.5px;top:590.20px;width:116.0px;color:#cfe6ff">79.3</div>
<div class="cell" style="left:226.5px;top:590.20px;width:116.0px;color:#cfe6ff">78.8</div>
<div class="cell" style="left:342.5px;top:590.20px;width:116.0px;color:#cfe6ff">667</div>
<div class="cell" style="left:458.5px;top:590.20px;width:115.5px;color:#cfe6ff">0.0</div>
<div class="cell" style="left:574px;top:590.20px;width:116px;color:#cfe6ff">0.0</div>
<div class="cell" style="left:690px;top:590.20px;width:117.5px;color:#cfe6ff">0</div>
<div class="cell" style="left:-6px;top:610.90px;width:116.5px;color:#2e2e2e">27.0</div>
<div class="cell" style="left:110.5px;top:610.90px;width:116.0px;color:#2e2e2e">81.9</div>
<div class="cell" style="left:226.5px;top:610.90px;width:116.0px;color:#2e2e2e">81.4</div>
<div class="cell" style="left:342.5px;top:610.90px;width:116.0px;color:#2e2e2e">385</div>
<div class="cell" style="left:458.5px;top:610.90px;width:115.5px;color:#2e2e2e">0.0</div>
<div class="cell" style="left:574px;top:610.90px;width:116px;color:#2e2e2e">0.0</div>
<div class="cell" style="left:690px;top:610.90px;width:117.5px;color:#2e2e2e">0</div>
<div class="cell" style="left:-6px;top:631.60px;width:116.5px;color:#2e2e2e">28.0</div>
<div class="cell" style="left:110.5px;top:631.60px;width:116.0px;color:#2e2e2e">83.7</div>
<div class="cell" style="left:226.5px;top:631.60px;width:116.0px;color:#2e2e2e">83.2</div>
<div class="cell" style="left:342.5px;top:631.60px;width:116.0px;color:#2e2e2e">556</div>
<div class="cell" style="left:458.5px;top:631.60px;width:115.5px;color:#2e2e2e">0.0</div>
<div class="cell" style="left:574px;top:631.60px;width:116px;color:#2e2e2e">0.0</div>
<div class="cell" style="left:690px;top:631.60px;width:117.5px;color:#2e2e2e">0</div>
<div class="cell" style="left:-6px;top:652.30px;width:116.5px;color:#2e2e2e">29.0</div>
<div class="cell" style="left:110.5px;top:652.30px;width:116.0px;color:#2e2e2e">85.5</div>
<div class="cell" style="left:226.5px;top:652.30px;width:116.0px;color:#2e2e2e">85.0</div>
<div class="cell" style="left:342.5px;top:652.30px;width:116.0px;color:#2e2e2e">556</div>
<div class="cell" style="left:458.5px;top:652.30px;width:115.5px;color:#2e2e2e">0.0</div>
<div class="cell" style="left:574px;top:652.30px;width:116px;color:#2e2e2e">0.0</div>
<div class="cell" style="left:690px;top:652.30px;width:117.5px;color:#2e2e2e">0</div>
<div class="abs" style="left:808.5px;top:195.4px;width:15.5px;height:477.6px;background:linear-gradient(90deg,#e6e6e6,#ededed 50%,#e8e8e8)"></div>
<div class="abs" style="left:808.5px;top:195.4px;width:15.5px;height:21px;background:#f3f3f3"></div>
<div class="abs" style="left:810.3px;top:320px;width:12.3px;height:338.5px;background:linear-gradient(90deg,#d9d9d9,#f4f4f4 25%,#e9e9e9 60%,#d2d2d2);border:1px solid #c4c4c4;border-radius:1px"></div>
<div class="abs" style="left:813.5px;top:486px;width:6px;height:1px;background:#6a6a6a"></div>
<div class="abs" style="left:813.5px;top:488.5px;width:6px;height:1px;background:#6a6a6a"></div>
<div class="abs" style="left:813.5px;top:491px;width:6px;height:1px;background:#6a6a6a"></div>
<svg class="abs" style="left:808px;top:195px" width="16" height="20"><path d="M6 10 L9 7 L12 10 Z" fill="#4a4a4a"/></svg>
<svg class="abs" style="left:808px;top:660px" width="16" height="13"><path d="M6 6 L9 9 L12 6 Z" fill="#4a4a4a"/></svg>
<div class="abs" style="left:823px;top:0;width:1.2px;height:195.4px;background:#7a8fac"></div>
<div class="abs" style="left:824px;top:195.4px;width:1px;height:477.6px;background:#1e1e1e"></div>
<div class="abs" style="left:824.2px;top:0;width:1px;height:195.4px;background:#c9d9ee"></div>
<div class="abs" style="left:825px;top:0;width:1px;height:673px;background:#dde8f5"></div>
<div class="abs" style="left:826px;top:0;width:2px;height:673px;background:linear-gradient(90deg,#7f97b6,#9fb5d0)"></div>
<div class="abs" style="left:1073px;top:436.8px;width:33px;height:33px;border-radius:50%;background:#f4f4f4;box-shadow:0 0 2px 0.5px #9a9a9a"></div>
<div class="abs" style="left:1075px;top:439.3px;width:28px;height:28px;border-radius:50%;background:radial-gradient(circle at 45% 40%,#f8a050,#ee8030 60%,#e07020)"></div>
<div class="abs" style="left:1077.5px;top:453.5px;width:4px;height:1.5px;background:#fde0c0"></div>
</body></html>
